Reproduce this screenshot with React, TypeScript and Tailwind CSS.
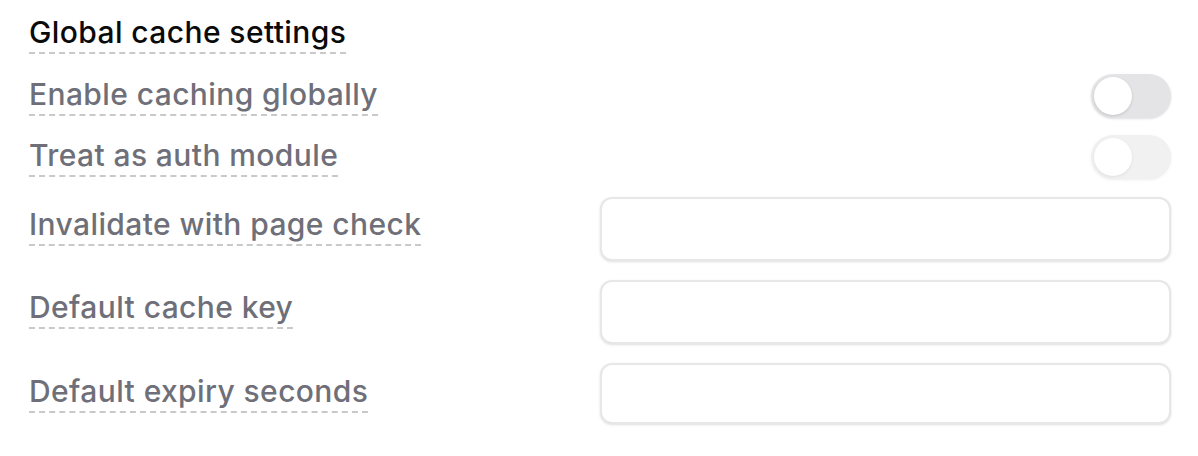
import React from "react";

function Label({ text, dark }: { text: string; dark?: boolean }) {
  return (
    <span
      className={`inline-block border-b-2 border-dashed border-[#c9c9c9] pb-[2px] text-[30px] leading-[36px] font-medium tracking-[0.4px] ${
        dark ? "text-[#0a0a0a]" : "text-[#6f6f79]"
      }`}
    >
      {text}
    </span>
  );
}

function Toggle({ disabled }: { disabled?: boolean }) {
  return (
    <div
      className={`flex h-[44px] w-[80px] items-center rounded-full bg-[#e4e4e7] px-[3px] shadow-sm ${
        disabled ? "opacity-50" : ""
      }`}
    >
      <div className="h-[38px] w-[38px] rounded-full bg-white shadow-[0_1px_3px_rgba(0,0,0,0.15)]" />
    </div>
  );
}

function TextInput({ height }: { height: string }) {
  return (
    <input
      type="text"
      className={`w-full rounded-[12px] border-2 border-[#e7e7e7] bg-white shadow-sm outline-none ${height}`}
    />
  );
}

export default function App() {
  return (
    <div
      className="min-h-screen bg-white pl-[29px] pr-[27px] pt-[14px]"
      style={{ fontFamily: "Inter, 'Noto Sans', sans-serif" }}
    >
      {/* Title */}
      <div>
        <Label text="Global cache settings" dark />
      </div>

      {/* Toggles */}
      <div className="mt-[20px] grid grid-cols-2 items-center">
        <div>
          <Label text="Enable caching globally" />
        </div>
        <div className="flex justify-end">
          <Toggle />
        </div>
      </div>
      <div className="mt-[17px] grid grid-cols-2 items-center">
        <div>
          <Label text="Treat as auth module" />
        </div>
        <div className="flex justify-end">
          <Toggle disabled />
        </div>
      </div>

      {/* Inputs */}
      <div className="mt-[18px] grid grid-cols-2 items-center">
        <div className="mb-[7px]">
          <Label text="Invalidate with page check" />
        </div>
        <TextInput height="h-[64px]" />
      </div>
      <div className="mt-[19px] grid grid-cols-2 items-center">
        <div className="mb-[6px]">
          <Label text="Default cache key" />
        </div>
        <TextInput height="h-[64px]" />
      </div>
      <div className="mt-[19px] grid grid-cols-2 items-center">
        <div className="mb-[2px]">
          <Label text="Default expiry seconds" />
        </div>
        <TextInput height="h-[61px]" />
      </div>
    </div>
  );
}
